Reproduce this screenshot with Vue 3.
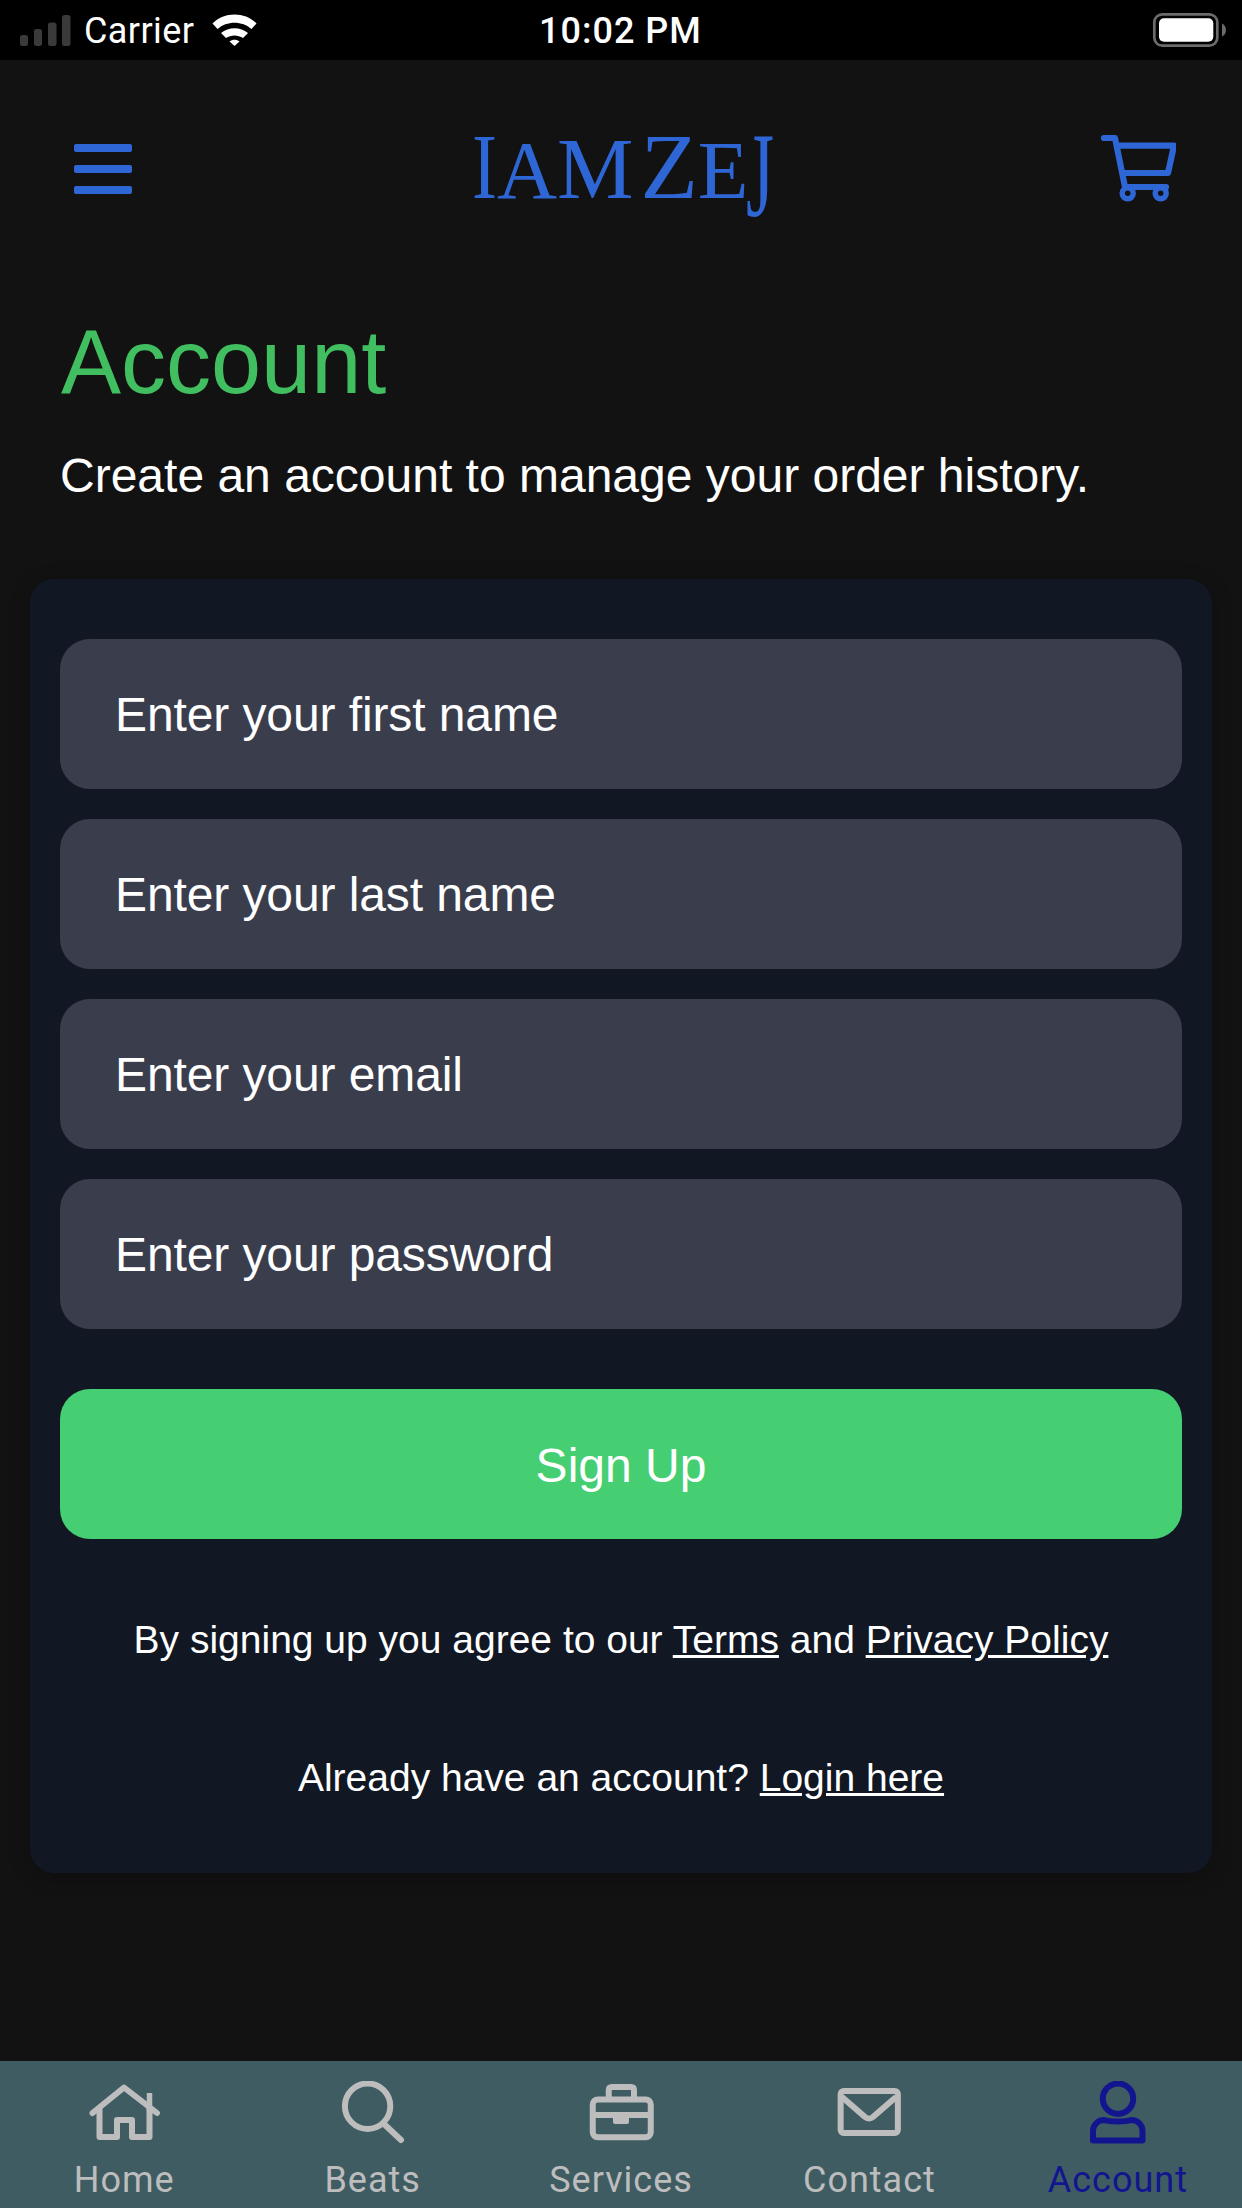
<script setup>
const fields = ['Enter your first name', 'Enter your last name', 'Enter your email', 'Enter your password']
</script>

<template>
  <div class="page">
    <div class="status-bar">
      <div class="status-left">
        <svg class="signal" width="51" height="31" viewBox="0 0 51 31">
          <rect x="0" y="20" width="8" height="11" rx="2.500" fill="#3a3a3a" />
          <rect x="14" y="14" width="8" height="17" rx="2.500" fill="#3a3a3a" />
          <rect x="28" y="7.500" width="8.500" height="23.500" rx="2.500" fill="#3a3a3a" />
          <rect x="42" y="0" width="8.500" height="31" rx="2.500" fill="#3a3a3a" />
        </svg>
        <span class="carrier">Carrier</span>
        <svg class="wifi" width="45" height="32" viewBox="0 0 45 32">
          <path d="M0.500 9.500C12 -2.500 33 -2.500 44.500 9.500L39.500 15C30.500 6.500 14.500 6.500 5.500 15Z" fill="#fff" />
          <path d="M9 19C16.500 12.500 28.500 12.500 36 19L31 24C26 20.500 19 20.500 14 24Z" fill="#fff" />
          <path d="M17.500 27.500C20.500 25 24.500 25 27.500 27.500L22.500 32Z" fill="#fff" />
        </svg>
      </div>
      <span class="clock">10:02 PM</span>
      <svg class="battery" width="76" height="36" viewBox="0 0 76 36">
        <rect x="2.300" y="2.300" width="63" height="31.400" rx="8" fill="none" stroke="#6b6b6b" stroke-width="2.700" />
        <rect x="7" y="6.300" width="54.300" height="23.400" rx="5" fill="#fff" />
        <path d="M70 11.500C73 13 74 15.500 74 18C74 20.500 73 23 70 24.500Z" fill="#6b6b6b" />
      </svg>
    </div>

    <header class="top-bar">
      <div class="burger"><i></i><i></i><i></i></div>
      <div class="logo"><span class="big i">I</span><span class="a">A</span><span class="m">M</span><span class="big z">Z</span><span class="e">E</span><span class="j">J</span></div>
      <svg class="cart" width="76" height="72" viewBox="0 0 76 72">
        <path d="M4 4H15L25 53H66" fill="none" stroke="#2f66d6" stroke-width="6.200" stroke-linecap="round" stroke-linejoin="round" />
        <path d="M17 11.700H74L68 39H24" fill="none" stroke="#2f66d6" stroke-width="6.200" stroke-linejoin="round" />
        <circle cx="27.700" cy="59.300" r="5.500" fill="#121212" stroke="#2f66d6" stroke-width="5.500" />
        <circle cx="60.700" cy="59.300" r="5.500" fill="#121212" stroke="#2f66d6" stroke-width="5.500" />
      </svg>
    </header>

    <main class="content">
      <h1 class="title">Account</h1>
      <p class="subtitle">Create an account to manage your order history.</p>

      <section class="card">
        <div class="fields">
          <div v-for="f in fields" :key="f" class="field">{{ f }}</div>
        </div>
        <div class="signup">Sign Up</div>
        <p class="note terms">By signing up you agree to our <u>Terms</u> and <u>Privacy Policy</u></p>
        <p class="note login">Already have an account? <u>Login here</u></p>
      </section>
    </main>

    <nav class="tab-bar">
      <div class="tab">
        <svg width="76" height="64" viewBox="0 0 76 64">
          <path d="M6.500 32L38 6.500L71 32" fill="none" stroke="currentColor" stroke-width="6" stroke-linecap="round" stroke-linejoin="round" />
          <path d="M13.500 27V56H31V39H46V56H63.500V27" fill="none" stroke="currentColor" stroke-width="6" stroke-linejoin="round" />
          <path d="M63.500 12V30" fill="none" stroke="currentColor" stroke-width="5.500" />
        </svg>
        <span>Home</span>
      </div>
      <div class="tab">
        <svg width="76" height="64" viewBox="0 0 76 64">
          <circle cx="32.600" cy="25.200" r="22.700" fill="none" stroke="currentColor" stroke-width="6" />
          <path d="M49 43L66 59" fill="none" stroke="currentColor" stroke-width="6" stroke-linecap="round" />
        </svg>
        <span>Beats</span>
      </div>
      <div class="tab">
        <svg width="76" height="64" viewBox="0 0 76 64">
          <rect x="9.750" y="18.500" width="58" height="37.800" rx="5" fill="none" stroke="currentColor" stroke-width="6" />
          <path d="M25.750 18V9C25.750 7 27 6 29 6H48C50 6 51 7 51 9V18" fill="none" stroke="currentColor" stroke-width="6" />
          <path d="M9.750 34H67.750" fill="none" stroke="currentColor" stroke-width="6" />
          <rect x="30" y="33" width="16" height="10" rx="2" fill="currentColor" />
        </svg>
        <span>Services</span>
      </div>
      <div class="tab">
        <svg width="76" height="64" viewBox="0 0 76 64">
          <rect x="9.650" y="10" width="57.200" height="42" rx="3" fill="none" stroke="currentColor" stroke-width="6" />
          <path d="M11 16L34 36C36 38 40 38 42 36L65 16" fill="none" stroke="currentColor" stroke-width="6" />
        </svg>
        <span>Contact</span>
      </div>
      <div class="tab active">
        <svg width="76" height="64" viewBox="0 0 76 64">
          <circle cx="38" cy="17.700" r="15.200" fill="none" stroke="currentColor" stroke-width="6" />
          <path d="M13 59.500V50C13 44 18 39 24 39C30 41 45 41 51 39C58 39 62.500 44 62.500 50V59.500Z" fill="none" stroke="currentColor" stroke-width="6" stroke-linejoin="round" />
        </svg>
        <span>Account</span>
      </div>
    </nav>
  </div>
</template>

<style>
body {
  margin: 0;
  background: #121212;
}
</style>

<style scoped>
.page {
  width: 1242px;
  height: 2208px;
  display: flex;
  flex-direction: column;
  background: #121212;
  color: #fff;
  font-family: "Liberation Sans", Arial, sans-serif;
  overflow: hidden;
}

.status-bar {
  height: 60px;
  flex: none;
  background: #000;
  display: flex;
  align-items: center;
  justify-content: space-between;
  padding: 0 14px 0 20px;
  position: relative;
}

.status-left {
  display: flex;
  align-items: center;
}

.signal {
  margin-right: 13px;
}

.carrier {
  font-family: Roboto, sans-serif;
  font-size: 36px;
  letter-spacing: 0.4px;
  margin: 2px 18px 0 0;
}

.clock {
  position: absolute;
  left: 539px;
  top: 10px;
  font-family: Roboto, sans-serif;
  font-size: 36px;
  font-weight: 500;
  letter-spacing: 1px;
}

.top-bar {
  height: 220px;
  flex: none;
  display: flex;
  align-items: center;
  justify-content: space-between;
  padding: 0 66px 0 74px;
}

.burger {
  width: 58px;
  display: flex;
  flex-direction: column;
  gap: 13px;
  margin-bottom: 3px;
}

.burger i {
  display: block;
  height: 8px;
  border-radius: 2px;
  background: #2f66d6;
}

.logo {
  width: 306px;
  margin-left: 18px;
  margin-bottom: 4px;
  font-family: "Liberation Serif", serif;
  font-size: 83px;
  line-height: 100px;
  white-space: nowrap;
  color: #2f66d6;
}

.big {
  font-size: 94px;
}

.i {
  display: inline-block;
  width: 25px;
  transform: scaleX(0.8);
  transform-origin: left;
}

.m {
  font-size: 86px;
}

.z {
  margin-left: 7px;
}

.j {
  display: inline-block;
  font-size: 120px;
  line-height: 60px;
  vertical-align: -18px;
  transform: scaleX(0.6);
  transform-origin: left;
  margin-left: -3px;
}

.content {
  flex: 1;
  padding: 0 30px;
}

.title {
  margin: 30px 0 0 31px;
  font-size: 90px;
  font-weight: 400;
  line-height: 104px;
  color: #41bf60;
}

.subtitle {
  margin: 32px 0 0 30px;
  font-size: 48px;
  line-height: 60px;
}

.card {
  margin-top: 73px;
  padding: 60px 30px;
  height: 1294px;
  box-sizing: border-box;
  border-radius: 24px;
  background: #111723;
  box-shadow: 0 4px 20px rgba(0, 0, 0, 0.25);
}

.fields {
  display: flex;
  flex-direction: column;
  gap: 30px;
}

.field {
  height: 150px;
  border-radius: 30px;
  background: #3a3d4c;
  display: flex;
  align-items: center;
  padding-left: 55px;
  font-size: 48px;
  letter-spacing: -0.1px;
}

.signup {
  margin-top: 60px;
  height: 150px;
  box-sizing: border-box;
  padding-top: 2px;
  border-radius: 30px;
  background: #46ce72;
  display: flex;
  align-items: center;
  justify-content: center;
  font-size: 48px;
}

.note {
  margin: 0;
  text-align: center;
  font-size: 39px;
  line-height: 50px;
}

.terms {
  margin-top: 76px;
}

.login {
  margin-top: 88px;
}

.tab-bar {
  height: 147px;
  flex: none;
  background: #3e5c62;
  display: flex;
  color: #bdbdbd;
}

.tab {
  flex: 1;
  display: flex;
  flex-direction: column;
  align-items: center;
  font-family: Roboto, sans-serif;
  font-size: 36px;
  letter-spacing: 1px;
  padding-top: 20px;
}

.tab svg {
  margin-bottom: 14px;
}

.tab.active {
  color: #12158f;
}
</style>
